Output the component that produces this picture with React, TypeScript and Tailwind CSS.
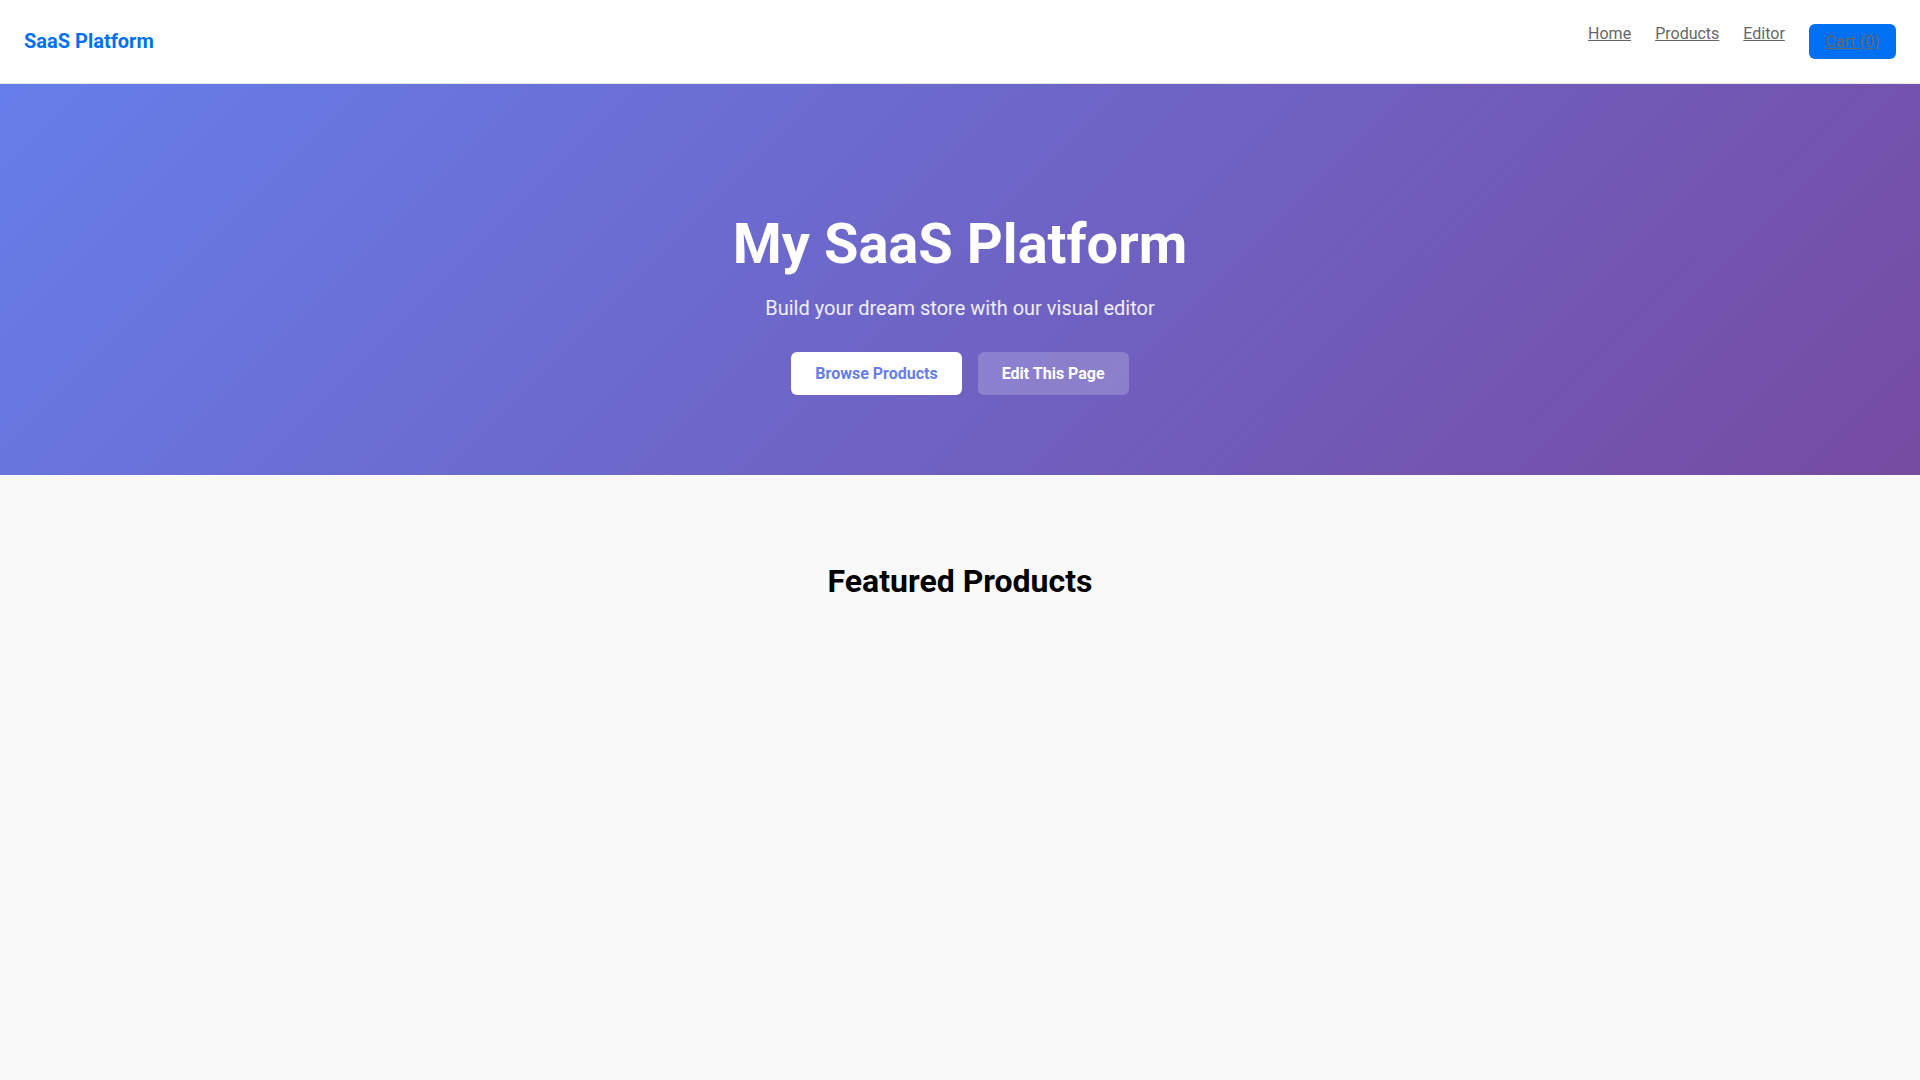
const navLinks = ["Home", "Products", "Editor"];

export default function App() {
  return (
    <div className="min-h-screen bg-[#f9f9f9] font-['Roboto',sans-serif]">
      <header className="flex items-start justify-between border-b border-[#e5e5e5] bg-white px-6 py-6">
        <a href="#" className="mt-[5px] text-xl font-bold leading-[1.2] text-[#0070f3]">
          SaaS Platform
        </a>
        <nav className="flex items-start gap-6">
          {navLinks.map((label) => (
            <a
              key={label}
              href="#"
              className="text-base leading-[1.2] text-[#666] underline"
            >
              {label}
            </a>
          ))}
          <button className="rounded-md bg-[#0070f3] px-[16.5px] py-2 text-base leading-[19px]">
            <a href="#" className="text-[#666] underline">
              Cart (0)
            </a>
          </button>
        </nav>
      </header>

      <section className="bg-[linear-gradient(135deg,#667eea_0%,#764ba2_100%)] pb-[80px] pt-[127px] text-center text-white">
        <h1 className="mb-[18px] text-[56px] font-bold leading-[1.2]">My SaaS Platform</h1>
        <p className="text-xl leading-[1.2] text-white/90">
          Build your dream store with our visual editor
        </p>
        <div className="mt-8 flex justify-center gap-4">
          <button className="rounded-md bg-white px-6 py-3 text-base font-bold leading-[19px] text-[#667eea]">
            Browse Products
          </button>
          <button className="rounded-md bg-white/20 px-6 py-3 text-base font-bold leading-[19px] text-white">
            Edit This Page
          </button>
        </div>
      </section>

      <section className="pt-[87px] text-center">
        <h2 className="text-[32px] font-bold leading-[1.2] text-black">Featured Products</h2>
      </section>
    </div>
  );
}
